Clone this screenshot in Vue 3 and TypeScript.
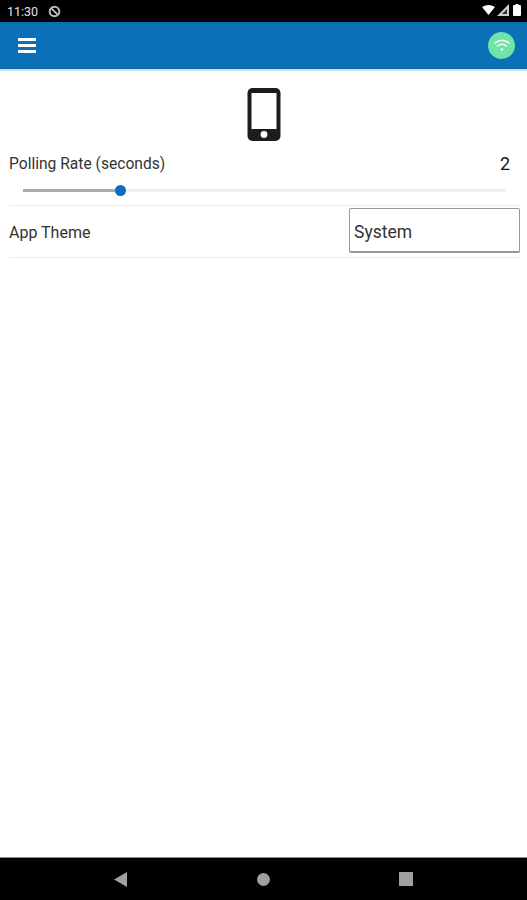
<script setup lang="ts">
const pollingRate = 2;
const theme = "System";
</script>

<template>
  <div class="screen">
    <div class="status">
      <div class="status-left">
        <span class="clock">11:30</span>
        <svg class="dnd" width="13" height="13" viewBox="0 0 13 13">
          <circle cx="6.500" cy="6.500" r="4.800" fill="none" stroke="#bbb" stroke-width="2" />
          <path d="M3.500 3.500l6 6" stroke="#ddd" stroke-width="1.600" />
        </svg>
      </div>
      <div class="status-right">
        <svg class="wifi-small" width="13" height="10" viewBox="0 0 13 10"><path d="M0 2Q6.500-2 13 2L6.500 10z" fill="#fff" /></svg>
        <svg class="signal" width="12" height="12" viewBox="0 0 12 12">
          <path d="M12 0V12H0z" fill="#ccc" />
          <path d="M10 5V10H5z" fill="#333" />
        </svg>
        <svg class="battery" width="8" height="12" viewBox="0 0 8 12"><path d="M2.500 0h3v1H7a1 1 0 0 1 1 1v9a1 1 0 0 1-1 1H1a1 1 0 0 1-1-1V2a1 1 0 0 1 1-1h1.500z" fill="#fff" /></svg>
      </div>
    </div>

    <header class="bar">
      <svg width="18" height="15" viewBox="0 0 18 15">
        <rect y="0" width="18" height="3" rx="0.500" fill="#fff" />
        <rect y="6" width="18" height="3" rx="0.500" fill="#fff" />
        <rect y="12" width="18" height="3" rx="0.500" fill="#fff" />
      </svg>
      <div class="wifi">
        <svg width="18" height="15" viewBox="0 0 18 15" fill="none" stroke="#fff" stroke-width="1.500" stroke-linecap="round">
          <path d="M2 5Q9-0.500 16 5" />
          <path d="M4.700 8Q9 4.700 13.300 8" />
          <circle cx="9" cy="11.500" r="1.200" fill="#fff" stroke="none" />
        </svg>
      </div>
    </header>

    <main class="content">
      <div class="device">
        <svg width="34" height="53" viewBox="0 0 34 53">
          <rect x="0.500" width="33" height="53" rx="5" fill="#1c1c1c" />
          <rect x="4.500" y="5" width="25" height="36" fill="#fff" />
          <circle cx="17" cy="46.500" r="3.400" fill="#fff" />
        </svg>
      </div>

      <div class="polling">
        <div class="polling-head">
          <span class="label">Polling Rate (seconds)</span>
          <span class="value">{{ pollingRate }}</span>
        </div>
        <div class="slider">
          <div class="track-on"></div>
          <div class="thumb"></div>
          <div class="track-off"></div>
        </div>
      </div>

      <div class="theme">
        <span class="label">App Theme</span>
        <div class="select">{{ theme }}</div>
      </div>
    </main>

    <nav class="nav">
      <svg width="14" height="15" viewBox="0 0 14 15"><path d="M13 0V15L0 7.500z" fill="#a0a0a0" /></svg>
      <div class="home"></div>
      <div class="recent"></div>
    </nav>
  </div>
</template>

<style scoped>
.screen {
  width: 527px;
  height: 900px;
  display: flex;
  flex-direction: column;
  background: #fff;
  font-family: Roboto, "Liberation Sans", sans-serif;
  color: #222;
  overflow: hidden;
}
.status {
  height: 22px;
  background: #000;
  display: flex;
  align-items: center;
  justify-content: space-between;
  padding: 0 6px 0 7px;
}
.status-left {
  display: flex;
  align-items: center;
  gap: 10px;
}
.clock {
  color: #e4e4e4;
  font-size: 12.500px;
}
.status-right {
  display: flex;
  align-items: center;
  gap: 2px;
  padding-bottom: 2px;
}
.battery {
  margin-left: 2px;
}
.bar {
  height: 46px;
  background: #0a70b8;
  border-bottom: 1px solid #0a62a4;
  display: flex;
  align-items: center;
  justify-content: space-between;
  padding: 0 12px 0 18px;
  box-sizing: content-box;
}
.wifi {
  width: 27px;
  height: 27px;
  border-radius: 50%;
  background: #6fe3a8;
  display: flex;
  align-items: center;
  justify-content: center;
}
.content {
  flex: 1;
  border-top: 2px solid #cfe3f5;
  padding: 0 7px 0 9px;
}
.device {
  display: flex;
  justify-content: center;
  padding-top: 17px;
  padding-right: 2px;
}
.polling {
  padding-top: 12px;
  border-bottom: 1px solid #ececec;
}
.polling-head {
  display: flex;
  justify-content: space-between;
  align-items: center;
  font-size: 15.600px;
  height: 20px;
  padding-right: 10px;
  color: #333;
}
.label {
  padding-top: 2px;
}
.value {
  font-size: 18px;
  color: #111;
}
.slider {
  display: flex;
  align-items: center;
  height: 32px;
  margin: 0 15px 0 14px;
  padding-top: 2px;
  box-sizing: border-box;
}
.track-on {
  width: 92px;
  height: 3px;
  background: #aaa;
}
.thumb {
  width: 11px;
  height: 11px;
  border-radius: 50%;
  background: #0a6cc0;
}
.track-off {
  flex: 1;
  height: 3px;
  background: #eee;
}
.theme {
  display: flex;
  align-items: center;
  justify-content: space-between;
  height: 51px;
  border-bottom: 1px solid #ececec;
  font-size: 16px;
  color: #333;
}
.select {
  width: 171px;
  height: 45px;
  align-self: flex-start;
  margin-top: 2px;
  box-sizing: border-box;
  border: 1px solid #999;
  border-bottom-width: 2px;
  border-radius: 2px;
  display: flex;
  align-items: center;
  padding: 4px 0 0 4px;
  font-size: 17.500px;
}
.nav {
  height: 42px;
  background: #000;
  border-top: 1px solid #888;
  display: flex;
  align-items: center;
  justify-content: center;
  gap: 129px;
}
.home {
  width: 13px;
  height: 13px;
  border-radius: 50%;
  background: #a0a0a0;
}
.recent {
  width: 14px;
  height: 14px;
  background: #a0a0a0;
}
</style>

<style>
body {
  background: #fff;
}
</style>
